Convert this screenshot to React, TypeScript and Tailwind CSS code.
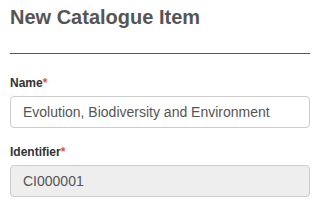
export default function App() {
  return (
    <div className="w-[320px] h-[208px] bg-white px-[10px] font-['Liberation_Sans',Arial,sans-serif] overflow-hidden">
      <h2 className="pt-[5px] text-[20px] leading-[24px] font-bold text-[#555]">New Catalogue Item</h2>
      <div className="mt-[24px] border-t border-[#555]" />

      <div className="mt-[21px]">
        <label className="block text-[12px] leading-[17px] font-bold text-[#333]">
          Name<span className="text-[#e74c3c]">*</span>
        </label>
        <input
          readOnly
          value="Evolution, Biodiversity and Environment"
          className="mt-[4px] block w-full h-[32px] px-[12px] text-[14px] text-[#555] border border-[#ccc] rounded-[4px] bg-white outline-none font-['Liberation_Sans',Arial,sans-serif]"
        />
      </div>

      <div className="mt-[16px]">
        <label className="block text-[12px] leading-[17px] font-bold text-[#333]">
          Identifier<span className="text-[#e74c3c]">*</span>
        </label>
        <input
          readOnly
          value="CI000001"
          className="mt-[4px] block w-full h-[32px] px-[12px] text-[14px] text-[#555] border border-[#ccc] rounded-[4px] bg-[#eee] outline-none font-['Liberation_Sans',Arial,sans-serif]"
        />
      </div>
    </div>
  );
}
